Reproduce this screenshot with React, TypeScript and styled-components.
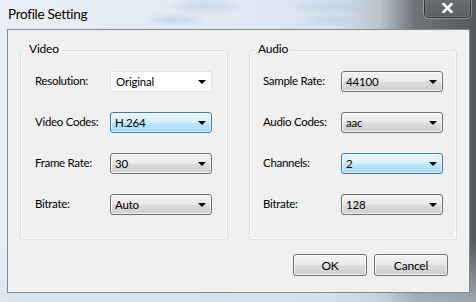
import React from "react";
import styled, { createGlobalStyle, css } from "styled-components";

const Global = createGlobalStyle`
  html, body { margin: 0; padding: 0; }
  body {
    width: 476px;
    height: 302px;
    overflow: hidden;
    font-family: Lato, "Noto Sans", sans-serif;
  }
`;

const Glass = styled.div`
  position: relative;
  width: 476px;
  height: 302px;
  overflow: hidden;
  background:
    linear-gradient(180deg, rgba(255,255,255,0) 80%, rgba(210,220,230,0.6) 100%),
    radial-gradient(ellipse 40px 10px at 205px 6px, rgba(150,180,220,0.35), transparent),
    radial-gradient(ellipse 35px 8px at 175px 20px, rgba(150,180,220,0.35), transparent),
    radial-gradient(ellipse 40px 9px at 330px 6px, rgba(150,180,220,0.3), transparent),
    radial-gradient(ellipse 30px 8px at 330px 20px, rgba(150,180,220,0.3), transparent),
    linear-gradient(90deg, #e9eff6 0%, #e2eaf3 45%, #d7e2ee 70%, #b9c3cc 80%, #6f757b 87%, #54595e 100%);
  display: flex;
  flex-direction: column;
`;

const TitleBar = styled.div`
  height: 29px;
  display: flex;
  align-items: flex-start;
  justify-content: space-between;
  padding-left: 8px;
  box-sizing: border-box;
`;

const Title = styled.div`
  font-family: Lato, "Noto Sans", sans-serif;
  font-size: 13.5px;
  letter-spacing: -0.3px;
  line-height: 16px;
  padding-top: 6px;
  color: #000;
  text-shadow: 0 0 6px rgba(255,255,255,0.9);
`;

const CloseButton = styled.div`
  width: 47px;
  height: 19px;
  margin-right: 5px;
  margin-top: -1px;
  box-sizing: border-box;
  border: 1px solid rgba(40, 44, 48, 0.9);
  border-top: none;
  border-radius: 0 0 5px 5px;
  box-shadow: 0 0 0 1px rgba(190, 195, 200, 0.55), inset 0 0 0 1px rgba(255,255,255,0.12);
  background: linear-gradient(180deg, #6a6f74 0%, #5a5f64 100%);
  display: flex;
  align-items: center;
  justify-content: center;
`;

const Client = styled.div`
  margin-left: 7px;
  width: 463px;
  height: 264px;
  box-sizing: border-box;
  border: 1px solid #7d8a96;
  background: #f0f0f0;
  display: flex;
  flex-direction: column;
  padding: 20px 12px 0 12px;
`;

const Groups = styled.div`
  display: flex;
  gap: 21px;
`;

const Group = styled.div`
  position: relative;
  width: 208px;
  height: 190px;
  box-sizing: border-box;
  border: 1px solid #d5dfe5;
  border-radius: 3px;
  box-shadow: inset 0 0 0 1px #fdfdfd;
  padding-top: 20px;
`;

const Caption = styled.span`
  position: absolute;
  top: -9px;
  left: 6px;
  padding: 0 2px;
  background: #f0f0f0;
  font-size: 12px;
  letter-spacing: -0.2px;
  line-height: 14px;
  color: #000;
`;

const Rows = styled.div<{ $labelWidth: number; $indent: number }>`
  display: grid;
  grid-template-columns: ${(p) => p.$labelWidth}px 102px;
  grid-auto-rows: 21px;
  row-gap: 20px;
  padding-left: ${(p) => p.$indent}px;
  align-items: center;
`;

const Label = styled.span`
  font-size: 11.5px;
  letter-spacing: -0.3px;
  color: #000;
  line-height: 14px;
  margin-top: -2px;
`;

type Variant = "flat" | "normal" | "hot";

const Combo = styled.div<{ $variant: Variant }>`
  height: 21px;
  box-sizing: border-box;
  display: flex;
  align-items: center;
  justify-content: space-between;
  padding: 0 5px 0 4px;
  font-size: 11.5px;
  letter-spacing: -0.2px;
  color: #000;
  ${(p) =>
    p.$variant === "flat"
      ? css`
          background: #ffffff;
          border: 1px solid #e2e2e2;
          padding-left: 5px;
        `
      : p.$variant === "hot"
      ? css`
          border: 1px solid #3c7fb1;
          border-radius: 3px;
          background: linear-gradient(180deg, #eaf6fd 0%, #d9f0fc 48%, #bee6fd 52%, #a7d9f5 100%);
          box-shadow: inset 0 0 0 1px rgba(255,255,255,0.6);
        `
      : css`
          border: 1px solid #707070;
          border-radius: 3px;
          background: linear-gradient(180deg, #f2f2f2 0%, #ebebeb 48%, #dddddd 52%, #cfcfcf 100%);
          box-shadow: inset 0 0 0 1px rgba(255,255,255,0.7);
        `}
`;

const Arrow = styled.span`
  width: 0;
  height: 0;
  border-left: 4px solid transparent;
  border-right: 4px solid transparent;
  border-top: 4px solid #000;
  margin-top: 1px;
`;

const Footer = styled.div`
  display: flex;
  justify-content: flex-end;
  gap: 7px;
  padding-right: 9px;
  margin-top: 14px;
`;

const Button = styled.div`
  width: 74px;
  height: 22px;
  box-sizing: border-box;
  border: 1px solid #707070;
  border-radius: 3px;
  background: linear-gradient(180deg, #f2f2f2 0%, #ebebeb 48%, #dddddd 52%, #cfcfcf 100%);
  box-shadow: inset 0 0 0 1px rgba(255,255,255,0.7);
  display: flex;
  align-items: center;
  justify-content: center;
  font-size: 12px;
  letter-spacing: -0.2px;
  color: #000;
`;

type Field = { label: string; value: string; variant: Variant };

const video: Field[] = [
  { label: "Resolution:", value: "Original", variant: "flat" },
  { label: "Video Codes:", value: "H.264", variant: "hot" },
  { label: "Frame Rate:", value: "30", variant: "normal" },
  { label: "Bitrate:", value: "Auto", variant: "normal" },
];

const audio: Field[] = [
  { label: "Sample Rate:", value: "44100", variant: "normal" },
  { label: "Audio Codes:", value: "aac", variant: "normal" },
  { label: "Channels:", value: "2", variant: "hot" },
  { label: "Bitrate:", value: "128", variant: "normal" },
];

function Section({ title, fields, labelWidth, indent }: { title: string; fields: Field[]; labelWidth: number; indent: number }) {
  return (
    <Group>
      <Caption>{title}</Caption>
      <Rows $labelWidth={labelWidth} $indent={indent}>
        {fields.map((f) => (
          <React.Fragment key={f.label}>
            <Label>{f.label}</Label>
            <Combo $variant={f.variant}>
              <span>{f.value}</span>
              <Arrow />
            </Combo>
          </React.Fragment>
        ))}
      </Rows>
    </Group>
  );
}

export default function App() {
  return (
    <>
      <Global />
      <Glass>
        <TitleBar>
          <Title>Profile Setting</Title>
          <CloseButton>
            <svg width="11" height="10" viewBox="0 0 11 10">
              <path d="M1.5 1 L9.5 9 M9.5 1 L1.5 9" stroke="#ffffff" strokeWidth="2.6" strokeLinecap="square" />
            </svg>
          </CloseButton>
        </TitleBar>
        <Client>
          <Groups>
            <Section title="Video" fields={video} labelWidth={75} indent={14} />
            <Section title="Audio" fields={audio} labelWidth={78} indent={13} />
          </Groups>
          <Footer>
            <Button>OK</Button>
            <Button>Cancel</Button>
          </Footer>
        </Client>
      </Glass>
    </>
  );
}
